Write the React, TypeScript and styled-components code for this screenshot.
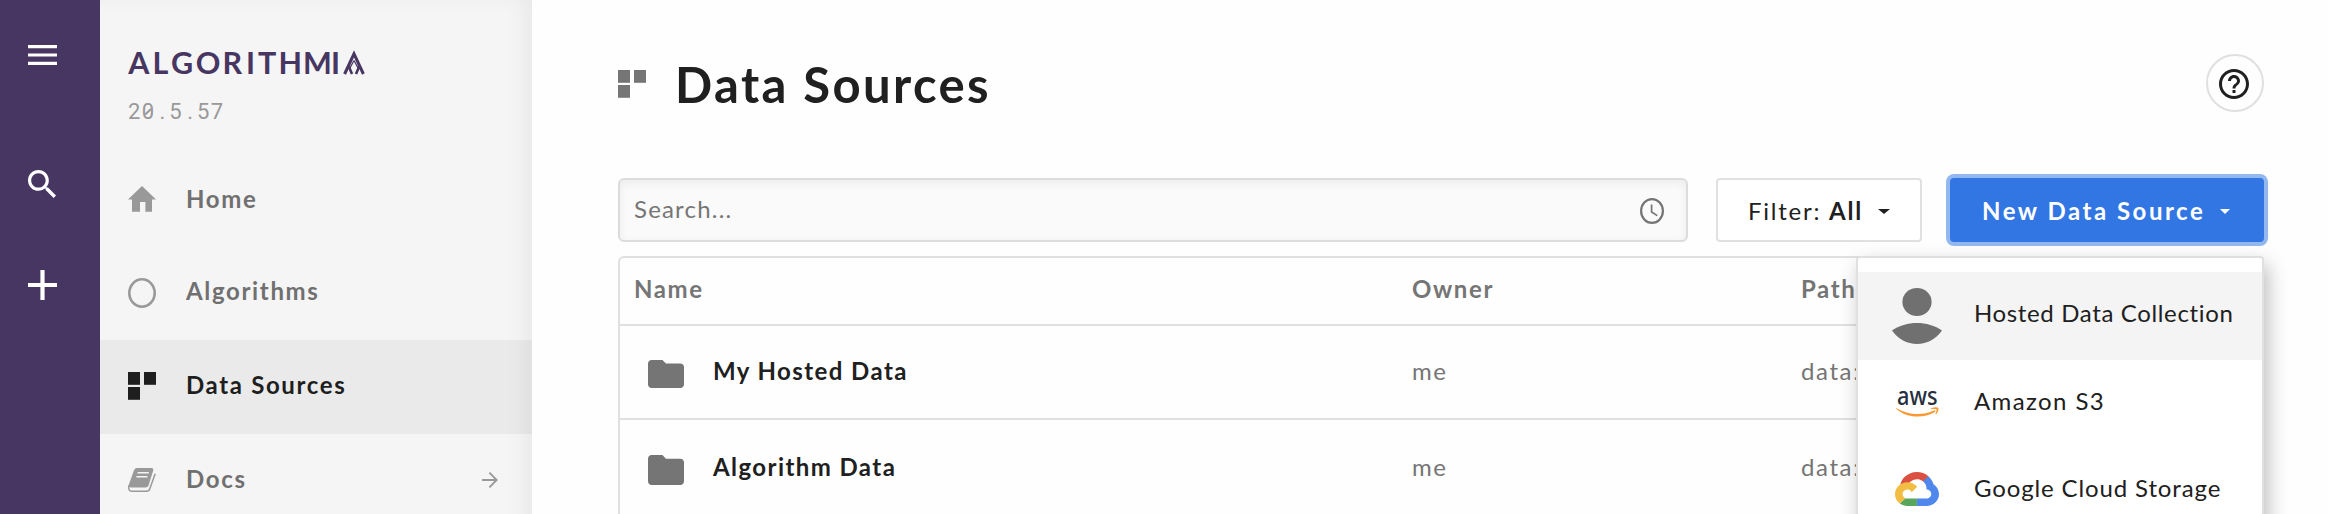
import React from "react";
import styled, { createGlobalStyle, css } from "styled-components";

const GlobalStyle = createGlobalStyle`
  * { box-sizing: border-box; }
  body {
    margin: 0;
    background: #fefefe;
    color: #202020;
    font-family: Lato, "Open Sans", sans-serif;
    font-size: 24px;
  }
`;

const Page = styled.div`
  display: flex;
  width: 100%;
  height: 514px;
  overflow: hidden;
`;

const Rail = styled.nav`
  display: flex;
  flex-direction: column;
  align-items: flex-start;
  flex: 0 0 100px;
  padding: 45px 0 0 28px;
  background: #463661;
`;

const RailButton = styled.button<{ $gap?: number }>`
  display: flex;
  margin: ${(p) => p.$gap ?? 0}px 0 0;
  padding: 0;
  border: 0;
  background: none;
`;

const Sidebar = styled.aside`
  display: flex;
  flex-direction: column;
  flex: 0 0 432px;
  background: #f5f5f5;
  position: relative;
  overflow: hidden;
  &::after {
    content: "";
    position: absolute;
    inset: -4px 0 -30px -10px;
    pointer-events: none;
    box-shadow: inset -8px 0 20px rgba(0, 0, 0, 0.05);
  }
`;

const Brand = styled.div`
  display: flex;
  flex-direction: column;
  flex: none;
  height: 156px;
  padding: 40px 0 0 28px;
`;

const LogoSvg = styled.svg`
  display: block;
  font-family: Lato, sans-serif;
  font-size: 30.5px;
  font-weight: 700;
`;

const Version = styled.div`
  margin-top: 16px;
  font: 400 22px/24px Roboto, sans-serif;
  letter-spacing: 1.42px;
  color: #999;
`;

const Dot = styled.span`
  display: inline-block;
  width: 13.77px;
  letter-spacing: 0;
  text-align: center;
`;

const SlashedZero = styled.span`
  position: relative;
  &::after {
    content: "";
    position: absolute;
    left: 2.4px;
    top: 12px;
    width: 7.5px;
    height: 1.5px;
    background: #999;
    transform: rotate(-44deg);
  }
`;

const NavItem = styled.a<{ $active?: boolean; $height?: number }>`
  display: flex;
  align-items: center;
  height: ${(p) => p.$height ?? 94}px;
  flex: none;
  padding: 0 34px 6px 28px;
  font-weight: 700;
  line-height: 28px;
  letter-spacing: 1.65px;
  color: #707070;
  ${(p) =>
    p.$active &&
    css`
      background: #eaeaea;
      color: #1e1e1e;
    `}
`;

const NavIcon = styled.svg`
  flex: none;
  width: 28px;
  height: 32px;
  margin-right: 30px;
  overflow: visible;
  color: ${(p) => p.color ?? "#999"};
`;

const NavLabel = styled.span`
  flex: 1;
  padding-top: 1px;
`;

const Main = styled.main`
  flex: 1;
  min-width: 0;
  padding: 54px 64px 0 86px;
`;

const Header = styled.header`
  display: flex;
  align-items: center;
  height: 58px;
`;

const TitleIcon = styled.svg`
  margin-top: 2px;
`;

const Title = styled.h1`
  flex: 1;
  margin: 2px 0 0 29px;
  font-size: 49px;
  font-weight: 700;
  line-height: 58px;
  letter-spacing: 2.4px;
`;

const HelpButton = styled.button`
  display: flex;
  align-items: center;
  justify-content: center;
  width: 58px;
  height: 58px;
  padding: 2px 2px 0 0;
  border: 2px solid #e0e0e0;
  border-radius: 50%;
  background: none;
`;

const Toolbar = styled.div`
  display: flex;
  gap: 28px;
  height: 64px;
  margin-top: 66px;
`;

const SearchBox = styled.label`
  display: flex;
  align-items: center;
  flex: 1;
  padding: 2px 22px 0 14px;
  border: 2px solid #dcdcdc;
  border-radius: 6px;
  background: #fafafa;
  box-shadow: inset 0 3px 10px rgba(0, 0, 0, 0.06);
`;

const SearchInput = styled.input`
  flex: 1;
  padding: 0 0 6px;
  border: 0;
  outline: 0;
  background: transparent;
  font: inherit;
  letter-spacing: 1.19px;
  &::placeholder {
    color: #757575;
    opacity: 1;
  }
`;

const Button = styled.button<{ $primary?: boolean }>`
  display: flex;
  align-items: center;
  width: ${(p) => (p.$primary ? 314 : 206)}px;
  height: 64px;
  padding: 2px 0 0 30px;
  border: 2px solid ${(p) => (p.$primary ? "#3276e3" : "#e0e0e0")};
  border-radius: 4px;
  background: ${(p) => (p.$primary ? "#3276e3" : "#fff")};
  color: ${(p) => (p.$primary ? "#fff" : "#202020")};
  box-shadow: ${(p) => (p.$primary ? "0 0 0 4px #93b7ef" : "none")};
  font: ${(p) => (p.$primary ? 700 : 400)} 24px/28px Lato, sans-serif;
  letter-spacing: ${(p) => (p.$primary ? 2.52 : 1.75)}px;
  white-space: pre;
`;

const Caret = styled.span<{ $size: number }>`
  margin-left: 15px;
  border: ${(p) => p.$size}px solid transparent;
  border-top: 5px solid currentColor;
  border-bottom: 0;
`;

const MenuAnchor = styled.div`
  position: relative;
`;

const Menu = styled.div`
  position: absolute;
  z-index: 2;
  top: 78px;
  right: 0;
  width: 408px;
  height: 300px;
  padding-top: 14px;
  border: 2px solid #e0e0e0;
  border-radius: 4px;
  background: #fff;
  box-shadow: 4px 8px 20px rgba(0, 0, 0, 0.26);
`;

const MenuItem = styled.div<{ $highlighted?: boolean; $height?: number }>`
  display: flex;
  align-items: center;
  height: ${(p) => p.$height ?? 88}px;
  padding-left: 34px;
  background: ${(p) => (p.$highlighted ? "#f4f4f4" : "transparent")};
`;

const MenuIcon = styled.span`
  display: flex;
  justify-content: center;
  width: 50px;
`;

const MenuLabel = styled.span<{ $spacing: number; $lift?: number }>`
  margin-left: 32px;
  padding-bottom: ${(p) => p.$lift ?? 6}px;
  line-height: 28px;
  letter-spacing: ${(p) => p.$spacing}px;
  white-space: nowrap;
`;

const Table = styled.section`
  height: 300px;
  margin-top: 14px;
  border: 2px solid #e0e0e0;
  border-radius: 6px;
`;

const Row = styled.div<{ $height: number; $lift: number; $head?: boolean }>`
  display: grid;
  grid-template-columns: 778px 389px 1fr;
  align-items: center;
  height: ${(p) => p.$height}px;
  padding-bottom: ${(p) => p.$lift}px;
  border-bottom: 2px solid #e0e0e0;
  font-weight: ${(p) => (p.$head ? 700 : 400)};
  letter-spacing: 1.6px;
  line-height: 28px;
  color: #757575;
`;

const Cell = styled.div`
  display: flex;
  align-items: center;
  padding-left: 14px;
`;

const NameCell = styled(Cell)`
  padding-left: 28px;
  font-weight: 700;
  letter-spacing: 1.42px;
  color: #202020;
`;

const FolderIcon = styled.svg`
  flex: none;
  margin: 5px 29px 0 0;
`;

const Squares = () => (
  <g fill="currentColor">
    <rect width="12" height="12.8" />
    <rect x="16" width="12" height="12.8" />
    <rect y="15" width="12" height="12.8" />
  </g>
);

const Logo = () => (
  <LogoSvg width="260" height="44" viewBox="0 -6 260 44" fill="#463661">
    <text y="28" x="0.3 24.4 43.1 67.8 94.4 118.1 130 150.4 175.1 203.1">ALGORITHMI</text>
    <g fill="none" stroke="#463661" strokeWidth="3">
      <path d="M216.6 28 L226 7.8 L235.4 28" />
      <path d="M226 14.5 L221.2 23.4 M226 14.5 L230.8 23.4" strokeWidth="1.2" />
      <path d="M220.8 20.5 L224 28 M231.2 20.5 L228 28" strokeWidth="2.6" />
    </g>
  </LogoSvg>
);

const HomeIcon = () => (
  <NavIcon viewBox="0 0 28 32">
    <path d="M14 4 L28 17.5 H24 V29.7 H17.4 V20 H12 V29.7 H4 V17.5 H0Z" fill="currentColor" />
  </NavIcon>
);

const AlgorithmsIcon = () => (
  <NavIcon viewBox="0 0 28 32">
    <ellipse cx="14" cy="19" rx="12.7" ry="13.7" fill="none" stroke="currentColor" strokeWidth="2.6" />
  </NavIcon>
);

const DataIcon = () => (
  <NavIcon viewBox="0 0 28 32" color="#1e1e1e">
    <g transform="translate(0 4)">
      <Squares />
    </g>
  </NavIcon>
);

const DocsIcon = () => (
  <NavIcon viewBox="0 0 28 32">
    <g transform="translate(0 6)">
      <path
        d="M9 0H23.3Q25.9 0 25.2 2.5L20.6 17.2Q19.8 19.6 17.4 19.6H3.6Q1 19.6 0.5 17.4L5.9 2.4Q6.9 0 9 0Z"
        fill="currentColor"
      />
      <path d="M9.6 4.7H20.8M8.4 8.8H19.4" stroke="#f4f4f4" strokeWidth="1.6" />
      <path
        d="M0.8 17.5Q0 23.2 3.6 23.2H18.6Q21 23.2 21.8 20.8L27.2 5.8"
        fill="none"
        stroke="currentColor"
        strokeWidth="1.5"
      />
    </g>
  </NavIcon>
);

const ArrowSvg = styled.svg`
  margin-top: 4px;
`;

const ArrowIcon = () => (
  <ArrowSvg width="16" height="16" viewBox="0 0 16 16" fill="none" stroke="#999" strokeWidth="1.9">
    <path d="M0 8H14.6M7.4 0.7L14.7 8L7.4 15.3" />
  </ArrowSvg>
);

const Folder = ({ height }: { height: number }) => (
  <FolderIcon width="36" height={height} viewBox="0 0 36 28.8" preserveAspectRatio="none">
    <path
      d="M14.4 0H3.6C1.6 0 0 1.6 0 3.6V25.2C0 27.2 1.6 28.8 3.6 28.8H32.4C34.4 28.8 36 27.2 36 25.2V7.2C36 5.2 34.4 3.6 32.4 3.6H18Z"
      fill="#757575"
    />
  </FolderIcon>
);

const ClockIcon = () => (
  <svg width="24" height="26" viewBox="0 0 24 26" fill="none" stroke="#757575">
    <ellipse cx="12" cy="13" rx="10.9" ry="11.9" strokeWidth="2.2" />
    <path d="M11.6 6.5V14L17.3 17.6" strokeWidth="1.7" />
  </svg>
);

const HelpIcon = () => (
  <svg width="36" height="36" viewBox="0 0 24 24" fill="#202020">
    <path d="M11 18h2v-2h-2v2zm1-16C6.48 2 2 6.48 2 12s4.48 10 10 10 10-4.48 10-10S17.52 2 12 2zm0 18c-4.41 0-8-3.59-8-8s3.59-8 8-8 8 3.59 8 8-3.59 8-8 8zm0-14c-2.21 0-4 1.79-4 4h2c0-1.1.9-2 2-2s2 .9 2 2c0 2-3 1.75-3 5h2c0-2.25 3-2.5 3-5 0-2.21-1.79-4-4-4z" />
  </svg>
);

const PersonIcon = () => (
  <svg width="50" height="56" viewBox="0 0 50 56" fill="#707070">
    <ellipse cx="25" cy="14" rx="14.6" ry="14" />
    <path d="M0 42.5C7 37.5 16 35 25 35S43 37.5 50 42.5C44 51 35 56 25 56S6 51 0 42.5Z" />
  </svg>
);

const AwsIcon = () => (
  <svg width="43" height="52" viewBox="0 -13 43 52">
    <text
      x="1"
      y="14"
      fill="#252f3e"
      fontFamily="Noto Sans, sans-serif"
      fontSize="24.5"
      fontWeight="500"
      textLength="40.5"
      lengthAdjust="spacingAndGlyphs"
    >
      aws
    </text>
    <g fill="#f79a34">
      <path d="M0.6 17.2C12 24.3 26.5 24.6 38 19.4C39.3 18.9 40 20.2 39 20.9C27.5 27.6 11 27.5 0.3 18C-0.1 17.6 0.1 17 0.6 17.2Z" />
      <path d="M34.8 17.6C37.5 15.9 41.3 15.9 42.3 16.7C43 17.7 42.1 21.6 40.1 23.2C39.7 23.5 39.3 23.3 39.5 22.8C40.1 21.5 41.1 18.9 40.5 18.3C39.9 17.6 36.7 18 35.2 18.2C34.7 18.2 34.5 17.9 34.8 17.6Z" />
    </g>
  </svg>
);

const GoogleCloudIcon = () => (
  <svg width="44" height="34" viewBox="0 0 256 206" preserveAspectRatio="none">
    <path
      fill="#db5141"
      d="M170.25 56.82L192.5 34.57L193.99 25.2C153.44-11.68 88.98-7.5 52.42 33.92C42.27 45.42 34.73 59.76 30.72 74.57L38.69 73.45L83.19 66.11L86.63 62.6C106.42 40.85 139.9 37.93 162.76 56.43Z"
    />
    <path
      fill="#4f87ed"
      d="M224.2 73.92C219.09 55.08 208.59 38.15 193.99 25.2L162.76 56.43C175.94 67.2 183.46 83.44 183.13 100.47V106.01C198.49 106.01 210.93 118.45 210.93 133.81S198.49 161.29 183.13 161.29H127.46V205.8H183.13C223.06 206.11 255.69 174.3 256 134.37C256.19 110.17 244.25 87.48 224.2 73.92Z"
    />
    <path
      fill="#58a55c"
      d="M71.87 205.8H127.46V161.29H71.87C67.91 161.29 64.07 160.44 60.47 158.79L28.22 191.04C40.79 200.53 56.12 205.86 71.87 205.8Z"
    />
    <path
      fill="#f2bd42"
      d="M71.87 61.43C31.94 61.66-.24 94.23 0 134.16C.13 156.46 10.55 177.45 28.22 191.04L60.47 158.79C46.48 152.47 40.26 136.01 46.58 122.02C52.9 108.03 69.37 101.81 83.36 108.13C89.52 110.91 94.46 115.85 97.25 122.02L129.49 89.77C115.77 71.83 94.45 61.34 71.87 61.43Z"
    />
  </svg>
);

export default function App() {
  return (
    <Page>
      <GlobalStyle />
      <Rail>
        <RailButton aria-label="Menu">
          <svg width="29" height="20" viewBox="0 0 29 20" fill="#fff">
            <path d="M0 0H29V3.2H0ZM0 8.4H29V11.6H0ZM0 16.8H29V20H0Z" />
          </svg>
        </RailButton>
        <RailButton $gap={105} aria-label="Search">
          <svg width="28" height="28" viewBox="3 3 17.49 17.49" fill="#fff">
            <path d="M15.5 14h-.79l-.28-.27C15.41 12.59 16 11.11 16 9.5 16 5.91 13.09 3 9.5 3S3 5.91 3 9.5 5.91 16 9.5 16c1.61 0 3.09-.59 4.23-1.57l.27.28v.79l5 4.99L20.49 19l-4.99-5zm-6 0C7.01 14 5 11.99 5 9.5S7.01 5 9.5 5 14 7.01 14 9.5 11.99 14 9.5 14z" />
          </svg>
        </RailButton>
        <RailButton $gap={72} aria-label="Create">
          <svg width="29" height="30" viewBox="0 0 29 30" fill="#fff">
            <path d="M12.4 0H16.6V12.9H29V17.1H16.6V30H12.4V17.1H0V12.9H12.4Z" />
          </svg>
        </RailButton>
      </Rail>

      <Sidebar>
        <Brand>
          <Logo />
          <Version>
            2<SlashedZero>0</SlashedZero>
            <Dot>.</Dot>5<Dot>.</Dot>57
          </Version>
        </Brand>
        <NavItem $height={90}>
          <HomeIcon />
          <NavLabel>Home</NavLabel>
        </NavItem>
        <NavItem>
          <AlgorithmsIcon />
          <NavLabel>Algorithms</NavLabel>
        </NavItem>
        <NavItem $active>
          <DataIcon />
          <NavLabel>Data Sources</NavLabel>
        </NavItem>
        <NavItem>
          <DocsIcon />
          <NavLabel>Docs</NavLabel>
          <ArrowIcon />
        </NavItem>
      </Sidebar>

      <Main>
        <Header>
          <TitleIcon width="28" height="28" viewBox="0 0 28 28" color="#757575">
            <Squares />
          </TitleIcon>
          <Title>Data Sources</Title>
          <HelpButton aria-label="Help">
            <HelpIcon />
          </HelpButton>
        </Header>

        <Toolbar>
          <SearchBox>
            <SearchInput placeholder="Search..." />
            <ClockIcon />
          </SearchBox>
          <Button>
            Filter: <b>All</b>
            <Caret $size={6.5} />
          </Button>
          <MenuAnchor>
            <Button $primary>
              New Data Source
              <Caret $size={5.5} />
            </Button>
            <Menu>
              <MenuItem $highlighted>
                <MenuIcon>
                  <PersonIcon />
                </MenuIcon>
                <MenuLabel $spacing={0.64}>Hosted Data Collection</MenuLabel>
              </MenuItem>
              <MenuItem>
                <MenuIcon>
                  <AwsIcon />
                </MenuIcon>
                <MenuLabel $spacing={1.4}>Amazon S3</MenuLabel>
              </MenuItem>
              <MenuItem $height={82}>
                <MenuIcon>
                  <GoogleCloudIcon />
                </MenuIcon>
                <MenuLabel $spacing={0.87} $lift={3}>
                  Google Cloud Storage
                </MenuLabel>
              </MenuItem>
            </Menu>
          </MenuAnchor>
        </Toolbar>

        <Table>
          <Row $head $height={68} $lift={4}>
            <Cell>Name</Cell>
            <Cell>Owner</Cell>
            <Cell>Path</Cell>
          </Row>
          <Row $height={94} $lift={2}>
            <NameCell>
              <Folder height={28} />
              My Hosted Data
            </NameCell>
            <Cell>me</Cell>
            <Cell>data://</Cell>
          </Row>
          <Row $height={96} $lift={0}>
            <NameCell>
              <Folder height={30} />
              Algorithm Data
            </NameCell>
            <Cell>me</Cell>
            <Cell>data://</Cell>
          </Row>
        </Table>
      </Main>
    </Page>
  );
}
